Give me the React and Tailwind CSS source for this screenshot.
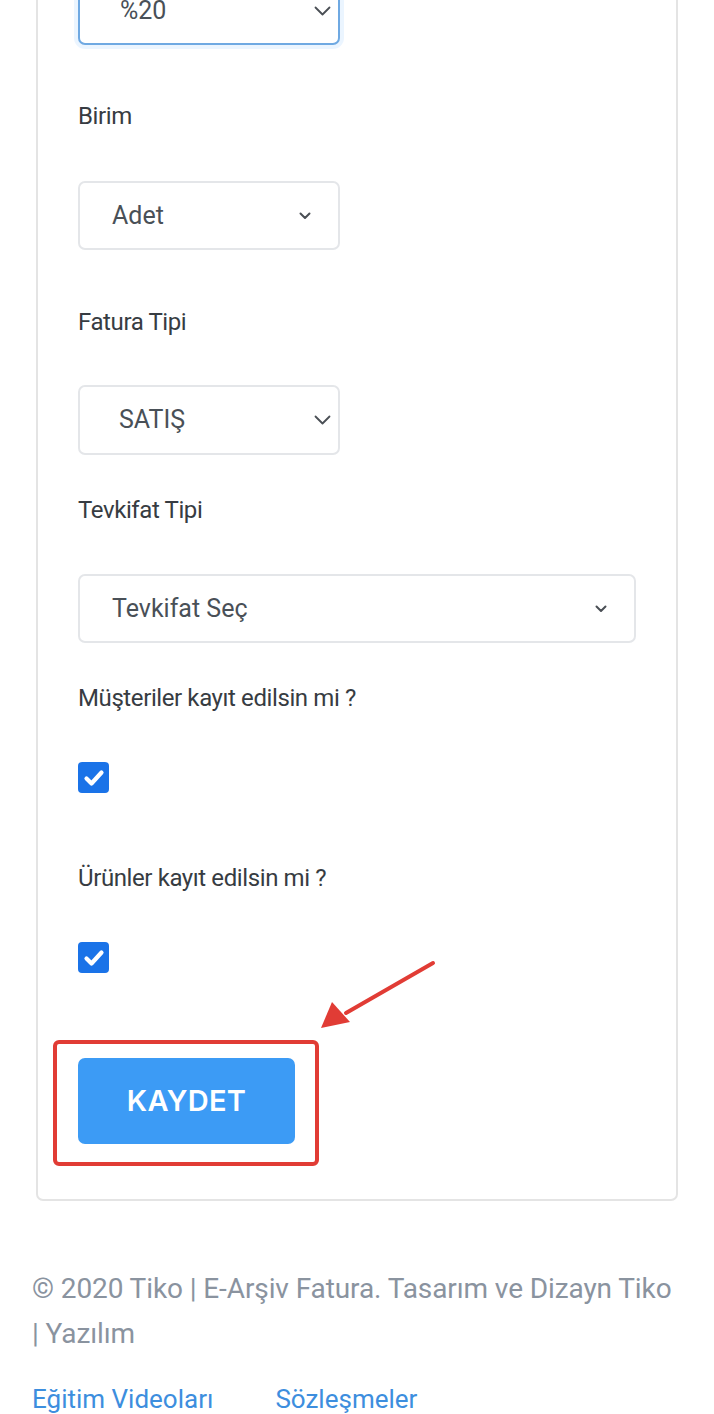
import React from "react";

const labelCls =
  "h-[36px] leading-[36px] text-[24px] tracking-[-0.4px] text-[#373c42]";

function Chevron({ big }) {
  if (big) {
    return (
      <svg width="17" height="10" viewBox="0 0 17 10" fill="none" className="shrink-0">
        <path d="M1.5 1.5 L8.5 8.5 L15.5 1.5" stroke="#4a4f55" strokeWidth="1.8" strokeLinecap="round" strokeLinejoin="round" />
      </svg>
    );
  }
  return (
    <svg width="12" height="8" viewBox="0 0 12 8" fill="none" className="shrink-0">
      <path d="M1.5 1.5 L6 6 L10.5 1.5" stroke="#4a4f55" strokeWidth="2" strokeLinecap="round" strokeLinejoin="round" />
    </svg>
  );
}

function Select({ value, wide, big, focused, textPad, className = "" }) {
  return (
    <div
      className={
        "flex items-center justify-between h-[69px] rounded-[7px] border-2 bg-white " +
        (wide ? "w-[558px] " : "w-[262px] ") +
        (focused
          ? "border-[#6fa9e2] shadow-[0_0_0_4px_rgba(0,123,255,0.08)] "
          : "border-[#e4e6e9] ") +
        (big ? "pr-[7px] " : "pr-[27px] ") +
        className
      }
    >
      <span className={"text-[25px] text-[#495057] " + textPad}>{value}</span>
      <Chevron big={big} />
    </div>
  );
}

function Check() {
  return (
    <div className="w-[31px] h-[31px] rounded-[4px] bg-[#1a73e8] flex items-center justify-center">
      <svg width="22" height="18" viewBox="0 0 22 18" fill="none">
        <path d="M3.5 9.5 L8.5 14.5 L18.5 3.5" stroke="white" strokeWidth="4.2" strokeLinecap="round" strokeLinejoin="round" />
      </svg>
    </div>
  );
}

export default function App() {
  return (
    <div className="min-h-screen bg-white" style={{ fontFamily: "Roboto, 'Liberation Sans', sans-serif" }}>
      <div className="mx-[36px] -mt-[58px] border-2 border-[#e4e4e4] rounded-[7px] pt-[32px] pl-[40px] pb-[55px]">
        <Select value="%20" big focused textPad="pl-[40px]" />

        <div className={labelCls + " mt-[53px]"}>Birim</div>
        <Select value="Adet" textPad="pl-[32px]" className="mt-[47px]" />

        <div className={labelCls + " mt-[54px]"}>Fatura Tipi</div>
        <Select value="SATIŞ" big textPad="pl-[39px]" className="mt-[45px] h-[70px]" />

        <div className={labelCls + " mt-[37px]"}>Tevkifat Tipi</div>
        <Select value="Tevkifat Seç" wide textPad="pl-[32px]" className="mt-[46px]" />

        <div className={labelCls + " mt-[37px]"}>Müşteriler kayıt edilsin mi ?</div>
        <div className="mt-[46px]">
          <Check />
        </div>

        <div className={labelCls + " mt-[67px]"}>Ürünler kayıt edilsin mi ?</div>
        <div className="mt-[46px]">
          <Check />
        </div>

        <div className="relative mt-[85px] w-[217px]">
          <button
            className="w-[217px] h-[86px] rounded-[7px] bg-[#3c9bf5] text-white text-[29px] font-semibold tracking-[0.3px]"
            style={{ fontFamily: "Inter, 'Liberation Sans', sans-serif" }}
          >
            KAYDET
          </button>
          {/* annotation box */}
          <div className="absolute -left-[25px] -top-[18px] -right-[24px] -bottom-[22px] border-[4px] border-[#e13c35] rounded-[6px] pointer-events-none" />
          {/* annotation arrow */}
          <svg
            className="absolute left-[240px] -top-[100px] pointer-events-none"
            width="122"
            height="76"
            viewBox="0 0 122 76"
            fill="none"
          >
            <line x1="115" y1="5" x2="28" y2="55" stroke="#e13c35" strokeWidth="4" strokeLinecap="round" />
            <polygon points="3,70 14,44 32,64" fill="#e13c35" />
          </svg>
        </div>
      </div>

      <div className="px-[32px] pt-[65px]">
        <p className="text-[28px] tracking-[-0.1px] leading-[45px] text-[#8a939f] max-w-[650px]">
          © 2020 Tiko | E-Arşiv Fatura. Tasarım ve Dizayn Tiko | Yazılım
        </p>
        <div className="flex gap-[62px] mt-[21px] text-[26px] leading-[45px] text-[#3d8ede]">
          <span>Eğitim Videoları</span>
          <span>Sözleşmeler</span>
        </div>
      </div>
    </div>
  );
}
